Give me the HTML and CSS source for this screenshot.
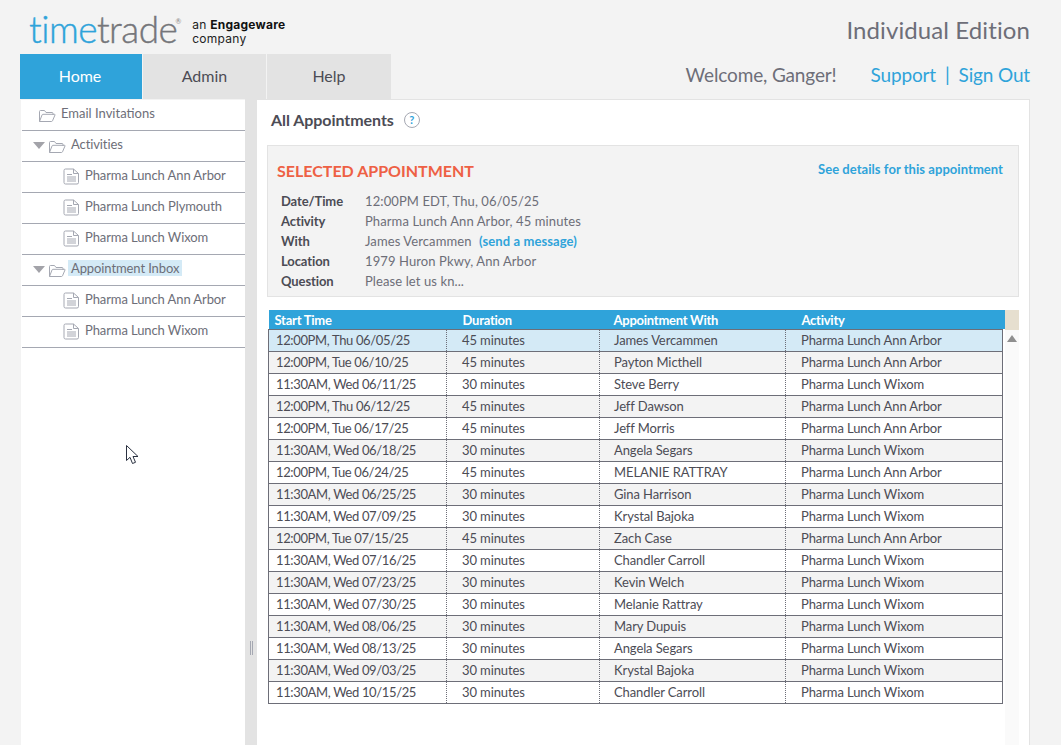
FILE: index.html
```html
<!DOCTYPE html>
<html>
<head>
	<title>TimeTrade - All Appointments</title>
	<link rel="stylesheet" href="styles.css">
</head>
<body>
	<div class="header">
		<div class="logo">
			<span class="logo-name"><span class="logo-time">time</span>trade</span><span class="logo-reg">®</span>
			<span class="logo-tag">an <b>Engageware</b><br>company</span>
		</div>
		<div class="edition">Individual Edition</div>
	</div>

	<div class="navbar">
		<div class="tabs">
			<div class="tab tab-active">Home</div>
			<div class="tab tab-admin">Admin</div>
			<div class="tab tab-help">Help</div>
		</div>
		<div class="userbar">
			<span class="welcome">Welcome, Ganger!</span>
			<a class="toplink">Support</a>
			<span class="toplink sep">|</span>
			<a class="toplink">Sign Out</a>
		</div>
	</div>

	<div class="content">
		<div class="sidebar">
			<ul class="tree">
				<li class="tree-row level-0">
					<svg class="icon-folder" viewBox="0 0 18 14"><path d="M1.5 12.5V2.5q0-1 1-1h4l1.5 2h6q1 0 1 1v1.5M1.5 12.5l2.5-6.5q.3-.7 1-.7h11.500q.8 0 .5.7l-2.500 5.800q-.3.700-1 .700z"/></svg>
					<span>Email Invitations</span>
				</li>
				<li class="tree-row level-1">
					<i class="arrow"></i>
					<svg class="icon-folder" viewBox="0 0 18 14"><path d="M1.5 12.5V2.5q0-1 1-1h4l1.5 2h6q1 0 1 1v1.5M1.500 12.500l2.500-6.500q.3-.7 1-.7h11.500q.8 0 .5.7l-2.500 5.800q-.3.700-1 .700z"/></svg>
					<span>Activities</span>
				</li>
				<li class="tree-row level-2">
					<svg class="icon-doc" viewBox="0 0 17 17"><path d="M2.500 1h8l5 4.500V14.500q0 1.500-1.500 1.500H2.500q-1.500 0-1.500-1.500V2.500q0-1.500 1.500-1.500zM10.500 1v4.500h5M4 6.500h5M4 9h9M4 11h9M4 13h9"/></svg>
					<span>Pharma Lunch Ann Arbor</span>
				</li>
				<li class="tree-row level-2">
					<svg class="icon-doc" viewBox="0 0 17 17"><path d="M2.500 1h8l5 4.500V14.500q0 1.500-1.500 1.500H2.500q-1.500 0-1.500-1.500V2.500q0-1.500 1.500-1.500zM10.500 1v4.500h5M4 6.500h5M4 9h9M4 11h9M4 13h9"/></svg>
					<span>Pharma Lunch Plymouth</span>
				</li>
				<li class="tree-row level-2">
					<svg class="icon-doc" viewBox="0 0 17 17"><path d="M2.500 1h8l5 4.500V14.500q0 1.500-1.500 1.500H2.500q-1.500 0-1.500-1.500V2.500q0-1.500 1.500-1.500zM10.500 1v4.500h5M4 6.500h5M4 9h9M4 11h9M4 13h9"/></svg>
					<span>Pharma Lunch Wixom</span>
				</li>
				<li class="tree-row level-1">
					<i class="arrow"></i>
					<svg class="icon-folder" viewBox="0 0 18 14"><path d="M1.500 12.500V2.500q0-1 1-1h4l1.500 2h6q1 0 1 1v1.500M1.500 12.500l2.500-6.500q.3-.7 1-.7h11.500q.8 0 .5.7l-2.500 5.800q-.3.700-1 .700z"/></svg>
					<span class="tree-selected">Appointment Inbox</span>
				</li>
				<li class="tree-row level-2">
					<svg class="icon-doc" viewBox="0 0 17 17"><path d="M2.500 1h8l5 4.500V14.500q0 1.500-1.500 1.500H2.500q-1.500 0-1.500-1.500V2.500q0-1.500 1.500-1.500zM10.500 1v4.500h5M4 6.500h5M4 9h9M4 11h9M4 13h9"/></svg>
					<span>Pharma Lunch Ann Arbor</span>
				</li>
				<li class="tree-row level-2">
					<svg class="icon-doc" viewBox="0 0 17 17"><path d="M2.500 1h8l5 4.500V14.500q0 1.500-1.500 1.500H2.500q-1.500 0-1.500-1.500V2.500q0-1.500 1.500-1.500zM10.500 1v4.500h5M4 6.500h5M4 9h9M4 11h9M4 13h9"/></svg>
					<span>Pharma Lunch Wixom</span>
				</li>
			</ul>
			<!-- mouse pointer caught in the screenshot -->
			<svg class="pointer" viewBox="0 0 13 20"><path d="M.5.500V15.500L4 12.300 6.500 18.500 9.500 17.300 7 11.500H12z"/></svg>
		</div>

		<div class="splitter"><i class="grip"></i></div>

		<div class="main">
			<div class="title-row">
				<h1>All Appointments</h1>
				<span class="help-icon">?</span>
			</div>

			<div class="selected-box">
				<div class="selected-head">
					<h2>SELECTED APPOINTMENT</h2>
					<a class="details-link">See details for this appointment</a>
				</div>
				<dl class="details">
					<dt>Date/Time</dt><dd>12:00PM EDT, Thu, 06/05/25</dd>
					<dt>Activity</dt><dd>Pharma Lunch Ann Arbor, 45 minutes</dd>
					<dt>With</dt><dd>James Vercammen <a class="msg-link">(send a message)</a></dd>
					<dt>Location</dt><dd>1979 Huron Pkwy, Ann Arbor</dd>
					<dt>Question</dt><dd>Please let us kn...</dd>
				</dl>
			</div>

			<div class="grid-wrap">
				<div class="grid-left">
					<table class="grid">
						<thead>
							<tr><th class="col-start">Start Time</th><th class="col-dur">Duration</th><th class="col-with">Appointment With</th><th class="col-act">Activity</th></tr>
						</thead>
						<tbody>
							<tr class="row-selected"><td>12:00PM, Thu 06/05/25</td><td>45 minutes</td><td>James Vercammen</td><td>Pharma Lunch Ann Arbor</td></tr>
							<tr><td>12:00PM, Tue 06/10/25</td><td>45 minutes</td><td>Payton Micthell</td><td>Pharma Lunch Ann Arbor</td></tr>
							<tr><td>11:30AM, Wed 06/11/25</td><td>30 minutes</td><td>Steve Berry</td><td>Pharma Lunch Wixom</td></tr>
							<tr><td>12:00PM, Thu 06/12/25</td><td>45 minutes</td><td>Jeff Dawson</td><td>Pharma Lunch Ann Arbor</td></tr>
							<tr><td>12:00PM, Tue 06/17/25</td><td>45 minutes</td><td>Jeff Morris</td><td>Pharma Lunch Ann Arbor</td></tr>
							<tr><td>11:30AM, Wed 06/18/25</td><td>30 minutes</td><td>Angela Segars</td><td>Pharma Lunch Wixom</td></tr>
							<tr><td>12:00PM, Tue 06/24/25</td><td>45 minutes</td><td>MELANIE RATTRAY</td><td>Pharma Lunch Ann Arbor</td></tr>
							<tr><td>11:30AM, Wed 06/25/25</td><td>30 minutes</td><td>Gina Harrison</td><td>Pharma Lunch Wixom</td></tr>
							<tr><td>11:30AM, Wed 07/09/25</td><td>30 minutes</td><td>Krystal Bajoka</td><td>Pharma Lunch Wixom</td></tr>
							<tr><td>12:00PM, Tue 07/15/25</td><td>45 minutes</td><td>Zach Case</td><td>Pharma Lunch Ann Arbor</td></tr>
							<tr><td>11:30AM, Wed 07/16/25</td><td>30 minutes</td><td>Chandler Carroll</td><td>Pharma Lunch Wixom</td></tr>
							<tr><td>11:30AM, Wed 07/23/25</td><td>30 minutes</td><td>Kevin Welch</td><td>Pharma Lunch Wixom</td></tr>
							<tr><td>11:30AM, Wed 07/30/25</td><td>30 minutes</td><td>Melanie Rattray</td><td>Pharma Lunch Wixom</td></tr>
							<tr><td>11:30AM, Wed 08/06/25</td><td>30 minutes</td><td>Mary Dupuis</td><td>Pharma Lunch Wixom</td></tr>
							<tr><td>11:30AM, Wed 08/13/25</td><td>30 minutes</td><td>Angela Segars</td><td>Pharma Lunch Wixom</td></tr>
							<tr><td>11:30AM, Wed 09/03/25</td><td>30 minutes</td><td>Krystal Bajoka</td><td>Pharma Lunch Wixom</td></tr>
							<tr><td>11:30AM, Wed 10/15/25</td><td>30 minutes</td><td>Chandler Carroll</td><td>Pharma Lunch Wixom</td></tr>
						</tbody>
					</table>
				</div>
				<div class="scroller">
					<div class="scroller-head"></div>
					<div class="scroller-body"><i class="scroll-up"></i></div>
				</div>
			</div>
		</div>
	</div>
</body>
</html>
```
FILE: styles.css
```css
* {
	box-sizing: border-box;
}

html, body {
	height: 100%;
}

body {
	margin: 0;
	padding: 0;
	overflow: hidden;
	background-color: #f3f3f3;
	color: #6d6e78;
	font-family: Lato, sans-serif;
	font-size: 14px;
}

/* header */
.header {
	height: 54px;
	padding: 0 31px 0 29px;
	display: flex;
	justify-content: space-between;
	align-items: flex-start;
}

.logo {
	display: flex;
	align-items: flex-start;
}

.logo-name {
	margin-top: 7px;
	font-size: 37px;
	line-height: 44px;
	font-weight: 300;
	letter-spacing: -0.5px;
	color: #75767a;
	-webkit-text-stroke: 0.4px;
}

.logo-time {
	color: #2fa3da;
}

.logo-reg {
	margin: 17px 0 0 -2px;
	font-size: 7px;
	line-height: 8px;
	color: #888;
}

.logo-tag {
	margin: 18px 0 0 11px;
	font-family: Inter, sans-serif;
	font-size: 12px;
	line-height: 14px;
	letter-spacing: 0.25px;
	color: #222;
}

.logo-tag b {
	color: #111;
}

.edition {
	margin-top: 15px;
	font-size: 24px;
	line-height: 30px;
	letter-spacing: 0.1px;
	color: #6d6e78;
}

/* navbar */
.navbar {
	height: 45px;
	padding: 0 31px 0 20px;
	display: flex;
	justify-content: space-between;
}

.tabs {
	display: flex;
}

.tab {
	width: 123px;
	margin-right: 1px;
	background-color: #e3e3e3;
	color: #4c4c55;
	font-size: 16px;
	line-height: 44px;
	text-align: center;
}

.tab-active {
	width: 122px;
	padding-right: 2px;
	background-color: #2fa3da;
	color: #fff;
}

.tab-help {
	width: 124px;
	margin-right: 0;
}

.userbar {
	display: flex;
	align-items: center;
	padding-bottom: 5px;
	font-size: 19px;
	letter-spacing: -0.15px;
}

.welcome {
	margin-right: 34px;
	color: #6d6e78;
}

.toplink {
	color: #2fa3da;
}

.sep {
	margin: 0 9px;
}

/* body layout */
.content {
	display: flex;
	height: 646px;
	padding-right: 31px;
	padding-left: 21px;
}

.sidebar {
	position: relative;
	width: 224px;
	margin-top: 1px;
	background-color: #fff;
}

.tree {
	list-style: none;
	margin: 0;
	padding: 0 0 0 1px;
}

.tree-row {
	display: flex;
	align-items: center;
	height: 31px;
	padding-bottom: 4px;
	border-bottom: 1px solid #a5a8b2;
	color: #6d6e78;
	font-size: 13px;
	letter-spacing: -0.1px;
}

.level-0 {
	height: 31px;
	padding-left: 16px;
	letter-spacing: 0;
}

.level-1 {
	padding-left: 11px;
}

.level-2 {
	padding-left: 41px;
}

.arrow {
	width: 0;
	height: 0;
	margin: 2px 3px 0 0;
	border-left: 6px solid transparent;
	border-right: 6px solid transparent;
	border-top: 7px solid #a3a3a9;
}

.icon-folder {
	width: 18px;
	height: 14px;
	margin: 5px 5px 0 0;
	fill: none;
	stroke: #a5a8b2;
	stroke-width: 1;
}

.icon-doc {
	width: 17px;
	height: 17px;
	margin: 3px 5px 0 0;
	fill: none;
	stroke: #a5a8b2;
	stroke-width: 1;
}

.tree-selected {
	margin-left: -3px;
	padding: 0 3px 0 3px;
	background-color: #d4eaf6;
}

.pointer {
	position: absolute;
	left: 105px;
	top: 345px;
	width: 13px;
	height: 20px;
	fill: #fff;
	stroke: #2a3140;
	stroke-width: 1;
}

.splitter {
	position: relative;
	width: 12px;
	background-color: #e3e3e3;
}

.grip {
	position: absolute;
	left: 5px;
	top: 542px;
	width: 3px;
	height: 14px;
	border-left: 1px solid #a5a8b2;
	border-right: 1px solid #a5a8b2;
}

/* main panel */
.main {
	width: 773px;
	padding: 0 10px 0 10px;
	background-color: #fff;
	border-top: 1px solid #e3e3e3;
	border-right: 1px solid #e3e3e3;
}

.title-row {
	display: flex;
	align-items: center;
	height: 45px;
	padding: 0 0 7px 4px;
}

h1 {
	margin: 0 10px 0 0;
	font-size: 16px;
	font-weight: 700;
	letter-spacing: -0.05px;
	color: #4c4c55;
}

.help-icon {
	width: 16px;
	height: 16px;
	margin-top: 2px;
	border: 1px solid #a5a8b2;
	border-radius: 50%;
	color: #2fa3da;
	font-size: 11px;
	font-weight: 700;
	line-height: 14px;
	text-align: center;
}

.selected-box {
	height: 152px;
	padding: 14px 15px 0 9px;
	background-color: #f3f3f3;
	border: 1px solid #e3e3e3;
}

.selected-head {
	display: flex;
	justify-content: space-between;
	height: 31px;
}

h2 {
	margin: 0;
	font-size: 16px;
	line-height: 22px;
	font-weight: 700;
	color: #ee6044;
}

.details-link {
	font-size: 13px;
	line-height: 19px;
	font-weight: 700;
	letter-spacing: 0.05px;
	color: #2fa3da;
}

.details {
	display: grid;
	grid-template-columns: 84px 1fr;
	grid-auto-rows: 20px;
	margin: 0;
	padding-left: 4px;
	font-size: 13px;
	line-height: 20px;
	letter-spacing: 0.1px;
}

.details dt {
	font-weight: 700;
	letter-spacing: -0.1px;
	color: #4c4c55;
}

.details dd {
	margin: 0;
	color: #6d6e78;
}

.msg-link {
	margin-left: 4px;
	font-weight: 700;
	color: #2fa3da;
}

/* appointments grid */
.grid-wrap {
	display: flex;
	margin-top: 13px;
	height: 435px;
}

.grid-left {
	width: 738px;
	padding-left: 1px;
}

.grid {
	width: 735px;
	table-layout: fixed;
	border-collapse: collapse;
	font-size: 13px;
	letter-spacing: -0.1px;
	color: #4c4c55;
}

.grid th {
	height: 19px;
	padding: 0 0 0 16px;
	background-color: #2fa3da;
	color: #fff;
	font-size: 13px;
	line-height: 18px;
	font-weight: 700;
	letter-spacing: -0.25px;
	text-align: left;
	vertical-align: bottom;
}

.grid th.col-start {
	padding-left: 6px;
}

.grid th.col-act {
	box-shadow: 2px 0 0 #2fa3da;
}

.col-start {
	width: 178px;
}

.col-dur {
	width: 153px;
}

.col-with {
	width: 186px;
}

.grid th.col-with,
.grid td:nth-child(3) {
	padding-left: 14px;
}

.grid td {
	height: 22px;
	padding: 0 0 0 15px;
	border: 1px solid #6d6e78;
	border-left: 1px dotted #6d6e78;
	border-right: 1px dotted #6d6e78;
}

.grid td:first-child {
	padding-left: 7px;
	letter-spacing: -0.36px;
	border-left: 1px solid #6d6e78;
}

.grid td:last-child {
	border-right: 1px solid #6d6e78;
}

.grid tbody tr:nth-child(even) {
	background-color: #f3f3f3;
}

.grid tbody tr.row-selected {
	background-color: #d4eaf6;
}

.scroller {
	width: 14px;
}

.scroller-head {
	height: 20px;
	background-color: #e6dfcf;
}

.scroller-body {
	height: 415px;
	padding: 5px 0 0 2px;
	background-color: #fafafa;
}

.scroll-up {
	display: block;
	width: 0;
	height: 0;
	border-left: 5px solid transparent;
	border-right: 5px solid transparent;
	border-bottom: 7px solid #8f8f8f;
}
```
